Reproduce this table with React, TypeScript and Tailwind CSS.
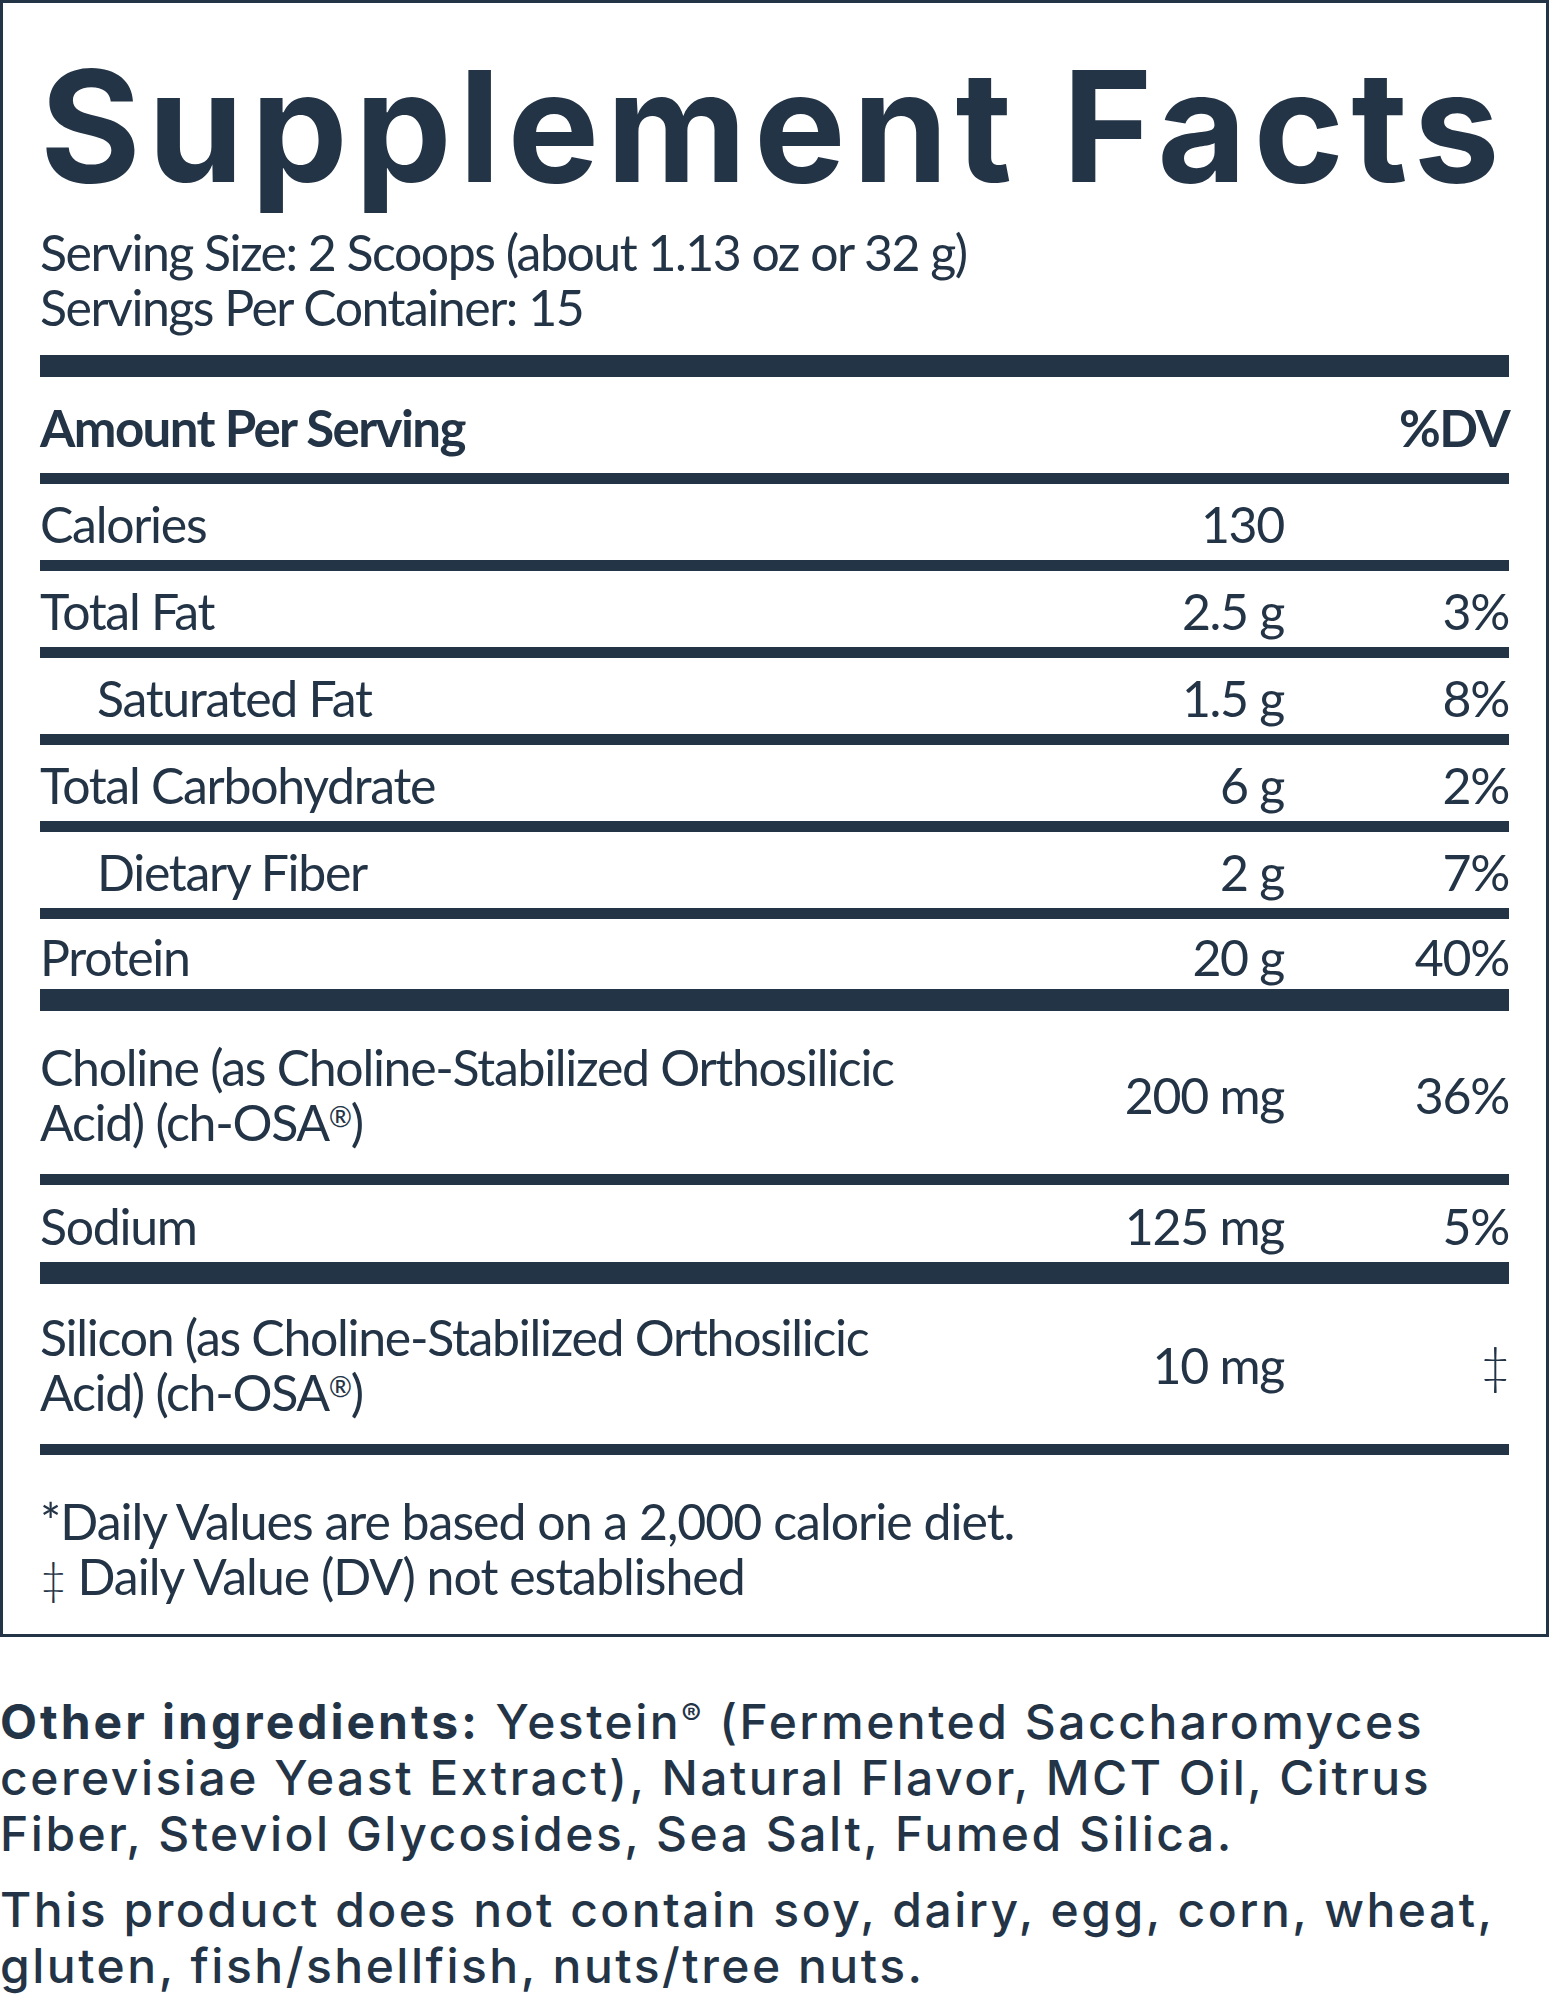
const ink = "text-[#243447]";

type Row = {
  name: React.ReactNode;
  amount?: string;
  dv?: React.ReactNode;
  indent?: boolean;
  pad: string;
};

const reg = <span className="align-[14px] text-[28px] leading-none">®</span>;

function Bar({ thick }: { thick?: boolean }) {
  return <div className={thick ? "h-[22px] bg-[#243447]" : "h-[11px] bg-[#243447]"} />;
}

function FactRow({ row }: { row: Row }) {
  return (
    <div className={`flex items-center ${row.pad}`}>
      <div className={`flex-1 whitespace-nowrap ${row.indent ? "pl-[57px]" : ""}`}>{row.name}</div>
      <div className="w-[300px] text-right whitespace-nowrap">{row.amount}</div>
      <div className="w-[225px] text-right whitespace-nowrap">{row.dv}</div>
    </div>
  );
}

export default function App() {
  return (
    <div className={`w-[1549px] bg-white ${ink}`}>
      <div className="border-[3px] border-[#243447] px-[37px] pt-[46px] pb-[30px] font-['Lato'] text-[50px] leading-[55px] tracking-[-1.3px]">
        <h1 className="font-['Inter'] font-bold text-[154px] leading-[154px] tracking-[7px] whitespace-nowrap">
          Supplement Facts
        </h1>

        <div className="mt-[22px] tracking-[-1.5px]">
          <div className="whitespace-nowrap">Serving Size: 2 Scoops (about 1.13 oz or 32 g)</div>
          <div>Servings Per Container: 15</div>
        </div>

        <div className="mt-[20px]">
          <Bar thick />
        </div>

        <div className="flex items-center justify-between pt-[23px] pb-[18px] font-bold text-[51px] tracking-[-1.6px]">
          <span>Amount Per Serving</span>
          <span>%DV</span>
        </div>
        <Bar />
        <FactRow row={{ name: "Calories", amount: "130", pad: "pt-[13px] pb-[8px]" }} />
        <Bar />
        <FactRow row={{ name: "Total Fat", amount: "2.5 g", dv: "3%", pad: "pt-[13px] pb-[8px]" }} />
        <Bar />
        <FactRow row={{ name: "Saturated Fat", amount: "1.5 g", dv: "8%", indent: true, pad: "pt-[13px] pb-[8px]" }} />
        <Bar />
        <FactRow row={{ name: "Total Carbohydrate", amount: "6 g", dv: "2%", pad: "pt-[13px] pb-[8px]" }} />
        <Bar />
        <FactRow row={{ name: "Dietary Fiber", amount: "2 g", dv: "7%", indent: true, pad: "pt-[13px] pb-[8px]" }} />
        <Bar />
        <FactRow row={{ name: "Protein", amount: "20 g", dv: "40%", pad: "pt-[11px] pb-[4px]" }} />
        <Bar thick />
        <FactRow
          row={{
            name: (
              <>
                Choline (as Choline-Stabilized Orthosilicic
                <br />
                Acid) (ch-OSA{reg})
              </>
            ),
            amount: "200 mg",
            dv: "36%",
            pad: "pt-[29px] pb-[24px]",
          }}
        />
        <Bar />
        <FactRow row={{ name: "Sodium", amount: "125 mg", dv: "5%", pad: "pt-[14px] pb-[8px]" }} />
        <Bar thick />
        <FactRow
          row={{
            name: (
              <>
                Silicon (as Choline-Stabilized Orthosilicic
                <br />
                Acid) (ch-OSA{reg})
              </>
            ),
            amount: "10 mg",
            dv: <span className="text-[52px] leading-none font-light">‡</span>,
            pad: "pt-[26px] pb-[24px]",
          }}
        />
        <Bar />

        <div className="pt-[39px] tracking-[-1px]">
          <div className="whitespace-nowrap">*Daily Values are based on a 2,000 calorie diet.</div>
          <div className="whitespace-nowrap">
            <span className="text-[46px] leading-none font-light">‡</span> Daily Value (DV) not established
          </div>
        </div>
      </div>

      <div className="mt-[57px] font-['Inter'] font-medium text-[48px] leading-[56px] tracking-[2.5px] whitespace-nowrap">
        <p>
          <span className="font-bold tracking-[3px]">Other ingredients:</span> Yestein
          <span className="align-[14px] text-[30px] leading-none">®</span> (Fermented Saccharomyces
          <br />
          cerevisiae Yeast Extract), Natural Flavor, MCT Oil, Citrus
          <br />
          Fiber, Steviol Glycosides, Sea Salt, Fumed Silica.
        </p>
        <p className="mt-[20px]">
          This product does not contain soy, dairy, egg, corn, wheat,
          <br />
          gluten, fish/shellfish, nuts/tree nuts.
        </p>
      </div>
    </div>
  );
}
